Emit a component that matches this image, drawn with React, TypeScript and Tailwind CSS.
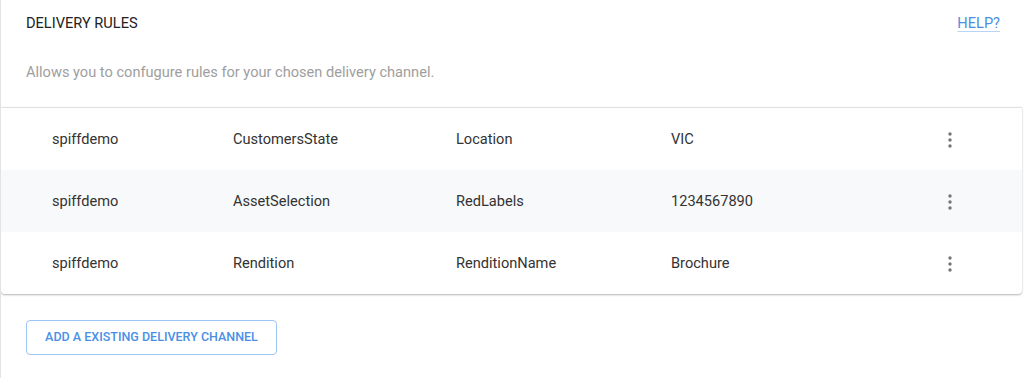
const rules = [
  { owner: "spiffdemo", type: "CustomersState", field: "Location", value: "VIC" },
  { owner: "spiffdemo", type: "AssetSelection", field: "RedLabels", value: "1234567890" },
  { owner: "spiffdemo", type: "Rendition", field: "RenditionName", value: "Brochure" },
];

function MoreIcon() {
  return (
    <svg width="6" height="16" viewBox="0 0 6 16" aria-hidden="true">
      <circle cx="3" cy="2" r="1.7" fill="#757575" />
      <circle cx="3" cy="8" r="1.7" fill="#757575" />
      <circle cx="3" cy="14" r="1.7" fill="#757575" />
    </svg>
  );
}

export default function App() {
  return (
    <div
      className="h-[378px] w-[1024px] overflow-hidden border-l border-[#e3e3e3] bg-white"
      style={{ fontFamily: "Roboto, 'Liberation Sans', sans-serif" }}
    >
      <div className="flex items-center justify-between pl-[25px] pr-[24px] pt-[13px]">
        <h2 className="text-[14.6px] leading-[20px] font-normal text-[#222]">DELIVERY RULES</h2>
        <a
          href="#"
          className="text-[14.6px] leading-[20px] text-[#4a90e2] underline decoration-[#b9d5f5] underline-offset-[3px]"
        >
          HELP?
        </a>
      </div>
      <p className="mt-[29px] pl-[25px] text-[14.6px] leading-[20px] text-[#9e9e9e]">
        Allows you to confugure rules for your chosen delivery channel.
      </p>

      <div className="mt-[25px] mr-[2px] rounded-b-[4px] border-t border-[#e0e0e0] bg-white shadow-[0_1px_2px_rgba(0,0,0,0.3)]">
        {rules.map((r, i) => (
          <div
            key={i}
            className={`flex h-[62px] items-center pt-[2px] text-[14.6px] text-[#333] ${i === 1 ? "bg-[#f8f9fa]" : ""}`}
          >
            <span className="w-[232px] pl-[51px]">{r.owner}</span>
            <span className="w-[223px]">{r.type}</span>
            <span className="w-[215px]">{r.field}</span>
            <span className="w-[276px]">{r.value}</span>
            <MoreIcon />
          </div>
        ))}
      </div>

      <div className="pl-[25px] pt-[26px]">
        <button className="h-[35px] w-[251px] rounded-[4px] border border-[#9fc6f3] text-[12.5px] font-medium text-[#4a8fe6]">
          ADD A EXISTING DELIVERY CHANNEL
        </button>
      </div>
    </div>
  );
}
